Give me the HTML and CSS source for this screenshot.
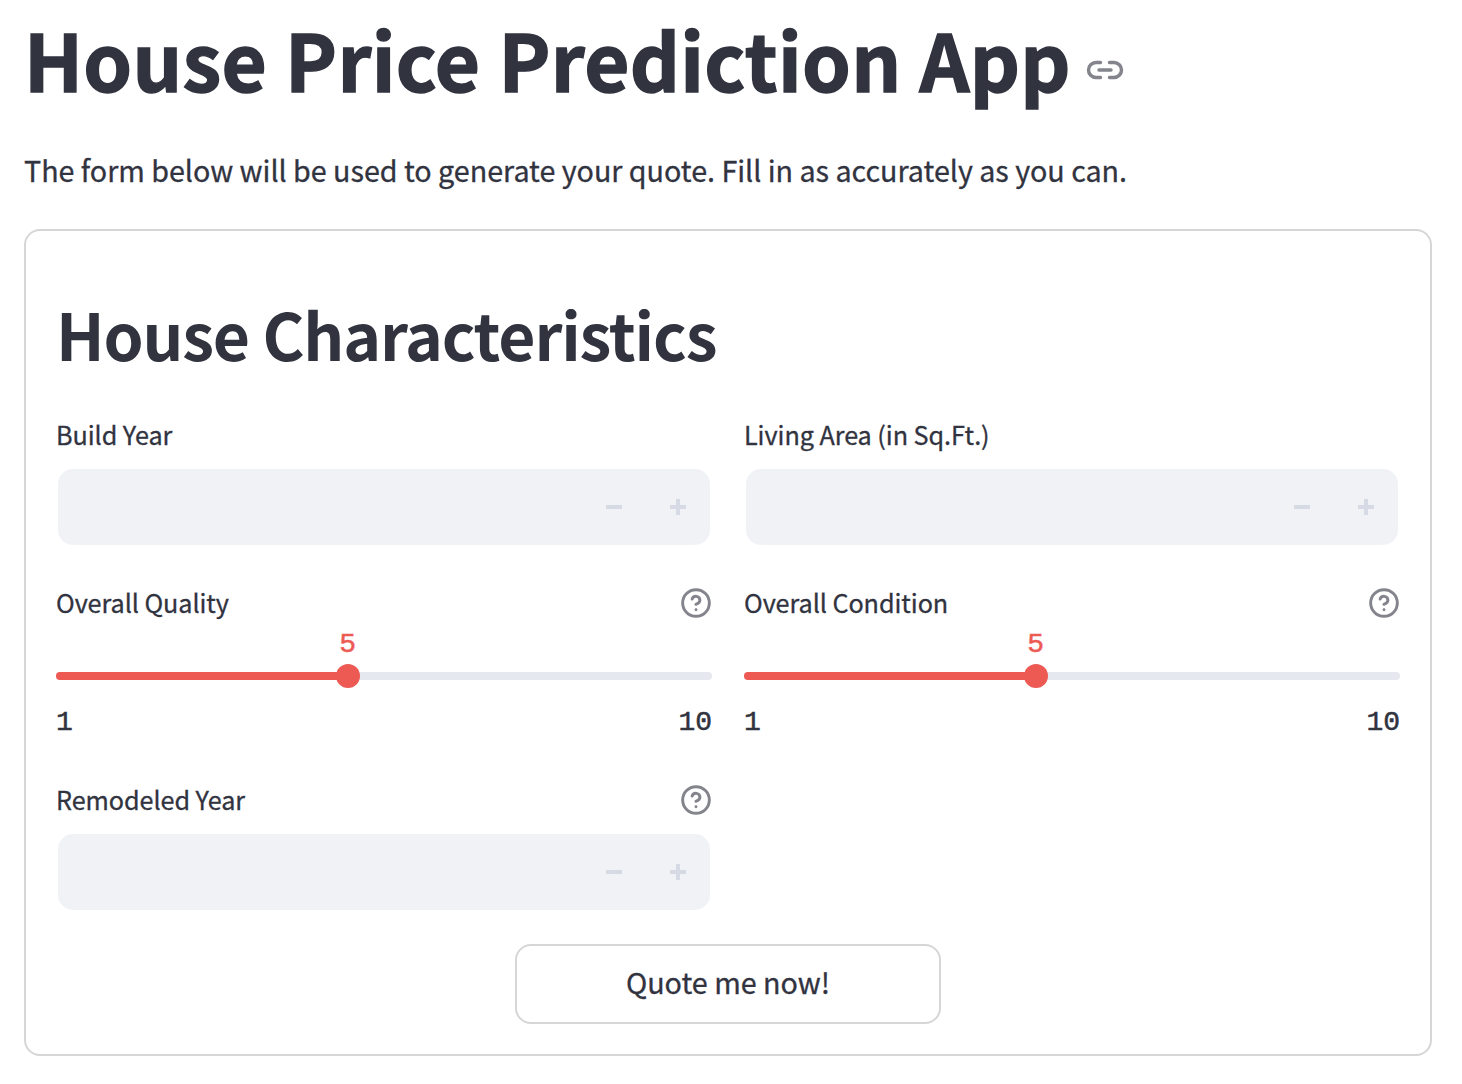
FILE: index.html
```html
<!DOCTYPE html>
<html lang="en">
<head>
<meta charset="utf-8">
<title>House Price Prediction App</title>
<link rel="stylesheet" href="styles.css">
</head>
<body>
<svg class="defs" width="0" height="0" aria-hidden="true">
  <symbol id="help" viewBox="0 0 24 24">
    <circle cx="12" cy="12" r="10"/>
    <path d="M9.09 9a3 3 0 0 1 5.83 1c0 2-3 3-3 3M12 17h.01"/>
  </symbol>
  <symbol id="minus" viewBox="0 0 16 16"><path d="M0 6h16v4H0z"/></symbol>
  <symbol id="plus" viewBox="0 0 16 16"><path d="M6 0h4v6h6v4h-6v6H6v-6H0V6h6z"/></symbol>
</svg>
<main class="app">
  <header class="title-row">
    <h1 class="title">House Price Prediction App</h1>
    <svg class="link-icon" viewBox="0 0 24 24"><path d="M15 7h3a5 5 0 0 1 5 5 5 5 0 0 1-5 5h-3m-6 0H6a5 5 0 0 1-5-5 5 5 0 0 1 5-5h3M8 12h8"/></svg>
  </header>
  <p class="intro">The form below will be used to generate your quote. Fill in as accurately as you can.</p>
  <form class="card">
    <h2 class="subtitle">House Characteristics</h2>
    <div class="grid">
      <div class="field">
        <div class="label-row"><span class="label">Build Year</span></div>
        <div class="number"><svg class="step"><use href="#minus"/></svg><svg class="step"><use href="#plus"/></svg></div>
      </div>
      <div class="field">
        <div class="label-row"><span class="label">Living Area (in Sq.Ft.)</span></div>
        <div class="number"><svg class="step"><use href="#minus"/></svg><svg class="step"><use href="#plus"/></svg></div>
      </div>
      <div class="field">
        <div class="label-row"><span class="label">Overall Quality</span><svg class="help"><use href="#help"/></svg></div>
        <div class="slider">
          <div class="track"><div class="fill"><div class="thumb"><span class="value">5</span></div></div></div>
          <div class="range"><span>1</span><span>10</span></div>
        </div>
      </div>
      <div class="field">
        <div class="label-row"><span class="label">Overall Condition</span><svg class="help"><use href="#help"/></svg></div>
        <div class="slider">
          <div class="track"><div class="fill"><div class="thumb"><span class="value">5</span></div></div></div>
          <div class="range"><span>1</span><span>10</span></div>
        </div>
      </div>
      <div class="field">
        <div class="label-row"><span class="label">Remodeled Year</span><svg class="help"><use href="#help"/></svg></div>
        <div class="number"><svg class="step"><use href="#minus"/></svg><svg class="step"><use href="#plus"/></svg></div>
      </div>
    </div>
    <button class="submit" type="button">Quote me now!</button>
  </form>
</main>
</body>
</html>
```
FILE: styles.css
```css
* { box-sizing: border-box; }
body {
  margin: 0;
  background: #fff;
  color: #31333f;
  font-family: "Noto Sans CJK SC", "Noto Sans", sans-serif;
}
h1, h2, p { margin: 0; }
svg { display: block; flex: none; }
.defs { position: absolute; }
.app { padding: 5px 30px 0 24px; }
.title-row { display: flex; align-items: center; height: 106px; }
.title {
  font-size: 78px;
  font-weight: 700;
  line-height: 106px;
  letter-spacing: 0.31px;
  white-space: nowrap;
  -webkit-text-stroke: 1.4px #31333f;
}
.link-icon {
  width: 36px;
  height: 36px;
  margin: 24px 0 0 16px;
  fill: none;
  stroke: #83848c;
  stroke-width: 2.3;
  stroke-linecap: round;
  stroke-linejoin: round;
  overflow: visible;
}
.intro {
  margin-top: 34px;
  font-size: 28.7px;
  line-height: 50px;
  letter-spacing: -0.02px;
  white-space: nowrap;
  -webkit-text-stroke: 0.3px #31333f;
}
.card {
  display: flex;
  flex-direction: column;
  height: 827px;
  margin-top: 34px;
  padding: 30px;
  border: 2px solid #d6d6d9;
  border-radius: 16px;
}
.subtitle {
  margin-top: 27px;
  font-size: 64.2px;
  font-weight: 600;
  line-height: 90px;
  letter-spacing: -1.15px;
  white-space: nowrap;
}
.grid {
  display: grid;
  grid-template-columns: 656px 656px;
  grid-template-rows: 133px 160px 125px;
  column-gap: 32px;
  row-gap: 35px;
  margin-top: 34px;
}
.grid .field:last-child { margin-top: 2px; }
.label-row {
  display: flex;
  align-items: center;
  justify-content: space-between;
  height: 44px;
  margin-bottom: 13px;
}
.label {
  font-size: 25.2px;
  line-height: 44px;
  letter-spacing: -0.06px;
  white-space: nowrap;
  -webkit-text-stroke: 0.3px #31333f;
}
.help {
  width: 32px;
  height: 32px;
  margin-top: 2px;
  fill: none;
  stroke: #83848c;
  stroke-width: 2.2;
  stroke-linecap: round;
  stroke-linejoin: round;
}
.number {
  display: flex;
  align-items: center;
  justify-content: flex-end;
  gap: 48px;
  height: 76px;
  margin: 0 2px;
  padding-right: 24px;
  border-radius: 15px;
  background: #f0f2f6;
}
.step { width: 16px; height: 16px; fill: #d5dae5; }
.slider {
  padding-top: 35px;
  font-family: "Liberation Mono", monospace;
  font-size: 28px;
  -webkit-text-stroke: 0.5px currentColor;
}
.track { height: 8px; border-radius: 4px; background: #e6e8f0; }
.fill {
  position: relative;
  width: 44.444%;
  height: 8px;
  border-radius: 4px;
  background: #ed5a53;
}
.thumb {
  position: absolute;
  top: -8px;
  right: -12px;
  width: 24px;
  height: 24px;
  border-radius: 50%;
  background: #ed5a53;
}
.value {
  position: absolute;
  bottom: 26px;
  left: 0;
  width: 24px;
  line-height: 34px;
  text-align: center;
  color: #ed5a53;
}
.range {
  display: flex;
  justify-content: space-between;
  margin-top: 23px;
  line-height: 40px;
}
.submit {
  width: 426px;
  height: 80px;
  margin: auto auto 0;
  padding: 0 0 4px;
  border: 2px solid #d6d6d9;
  border-radius: 16px;
  background: #fff;
  color: inherit;
  font: 28.7px/40px "Noto Sans CJK SC", "Noto Sans", sans-serif;
  -webkit-text-stroke: 0.3px #31333f;
}
```
